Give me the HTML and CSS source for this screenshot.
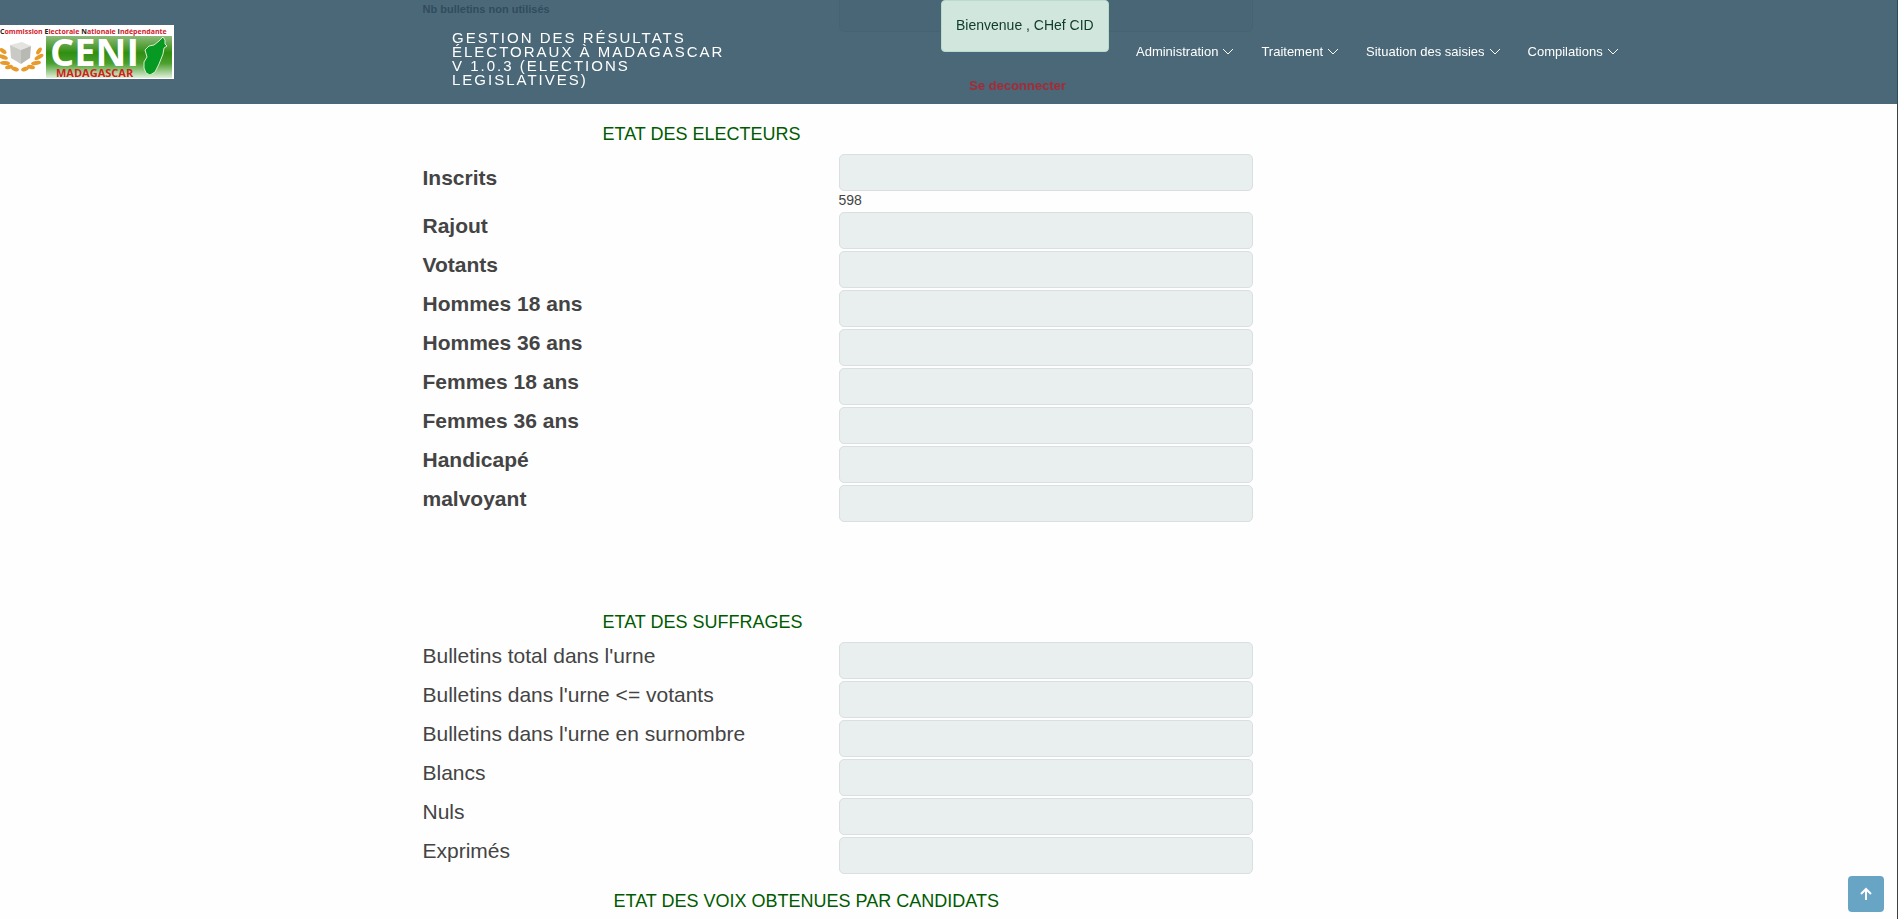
FILE: index.html
```html
<!DOCTYPE html>
<html lang="fr">
<head>
<meta charset="utf-8">
<title>Gestion des résultats électoraux</title>
<link rel="stylesheet" href="styles.css">
</head>
<body>
<header class="header">
  <a class="logo" href="#" aria-label="CENI Madagascar">
    <svg width="174" height="54" viewBox="0 0 174 54">
      <defs>
        <linearGradient id="green" x1="0" y1="0" x2="0" y2="1">
          <stop offset="0" stop-color="#8fbb7c"/><stop offset=".4" stop-color="#2f8f10"/><stop offset=".65" stop-color="#4aa02e"/><stop offset="1" stop-color="#e2efdc"/>
        </linearGradient>
      </defs>
      <rect width="174" height="54" fill="#fff"/>
      <rect x="46" y="11" width="126" height="42" fill="url(#green)"/>
      <text class="logo-top" x="0" y="9"><tspan class="dark">C</tspan>ommission <tspan class="dark">E</tspan>lectorale <tspan class="dark">N</tspan>ationale <tspan class="dark">I</tspan>ndépendante</text>
      <path d="M10 20l12-3 9 4-10 4z" fill="#e3e3df"/>
      <path d="M10 20l11 5v14l-10-6z" fill="#c9c9c5"/>
      <path d="M31 21l-10 4v14l9-6z" fill="#b9b9b4"/>
      <g fill="#e89a2b">
        <ellipse cx="3" cy="26" rx="4" ry="2" transform="rotate(35 3 26)"/><ellipse cx="3" cy="32" rx="5" ry="2" transform="rotate(20 3 32)"/><ellipse cx="5" cy="38" rx="5" ry="2" transform="rotate(5 5 38)"/><ellipse cx="9" cy="42" rx="4" ry="2" transform="rotate(-15 9 42)"/><ellipse cx="15" cy="44" rx="4" ry="2" transform="rotate(20 15 44)"/>
        <ellipse cx="39" cy="26" rx="4" ry="2" transform="rotate(-55 39 26)"/><ellipse cx="39" cy="32" rx="5" ry="2" transform="rotate(-30 39 32)"/><ellipse cx="36" cy="38" rx="5" ry="2" transform="rotate(-10 36 38)"/><ellipse cx="31" cy="42" rx="4" ry="2" transform="rotate(15 31 42)"/><ellipse cx="25" cy="44" rx="4" ry="2" transform="rotate(-20 25 44)"/>
      </g>
      <text class="logo-name" x="50" y="41">CENI</text>
      <text class="logo-country" x="56" y="52">MADAGASCAR</text>
      <path d="M163 12l2 3 0 4 2 2-3 2-1 6-4 10-4 8-5 3-4-2-2-5 0-6 3-5-2-7 4-4 5-1 5-4z" fill="#079a22" stroke="#d8edcf"/>
    </svg>
  </a>
  <h1 class="title">Gestion des résultats électoraux à Madagascar V 1.0.3 (Elections Legislatives)</h1>
  <div class="session">
    <div class="welcome">Bienvenue , CHef CID</div>
    <a class="logout" href="#">Se deconnecter</a>
  </div>
  <nav class="nav">
    <a href="#">Administration <svg class="chev" viewBox="0 0 12 12"><path d="M1 3l5 5 5-5"/></svg></a>
    <a href="#">Traitement <svg class="chev" viewBox="0 0 12 12"><path d="M1 3l5 5 5-5"/></svg></a>
    <a href="#">Situation des saisies <svg class="chev" viewBox="0 0 12 12"><path d="M1 3l5 5 5-5"/></svg></a>
    <a href="#">Compilations <svg class="chev" viewBox="0 0 12 12"><path d="M1 3l5 5 5-5"/></svg></a>
  </nav>
</header>

<main class="page">
  <form class="form">
    <div class="row unused">
      <label for="unused">Nb bulletins non utilisés</label>
      <input id="unused" type="text" disabled>
    </div>

    <h2 class="heading">ETAT DES ELECTEURS</h2>
    <div class="rows strong">
      <div class="row tall"><label for="inscrits">Inscrits</label><div class="field"><input id="inscrits" type="text" disabled><span class="hint">598</span></div></div>
      <div class="row"><label for="rajout">Rajout</label><input id="rajout" type="text" disabled></div>
      <div class="row"><label for="votants">Votants</label><input id="votants" type="text" disabled></div>
      <div class="row"><label for="h18">Hommes 18 ans</label><input id="h18" type="text" disabled></div>
      <div class="row"><label for="h36">Hommes 36 ans</label><input id="h36" type="text" disabled></div>
      <div class="row"><label for="f18">Femmes 18 ans</label><input id="f18" type="text" disabled></div>
      <div class="row"><label for="f36">Femmes 36 ans</label><input id="f36" type="text" disabled></div>
      <div class="row"><label for="handicape">Handicapé</label><input id="handicape" type="text" disabled></div>
      <div class="row"><label for="malvoyant">malvoyant</label><input id="malvoyant" type="text" disabled></div>
    </div>

    <h2 class="heading spaced">ETAT DES SUFFRAGES</h2>
    <div class="rows">
      <div class="row"><label for="total">Bulletins total dans l'urne</label><input id="total" type="text" disabled></div>
      <div class="row"><label for="valides">Bulletins dans l'urne &lt;= votants</label><input id="valides" type="text" disabled></div>
      <div class="row"><label for="surnombre">Bulletins dans l'urne en surnombre</label><input id="surnombre" type="text" disabled></div>
      <div class="row"><label for="blancs">Blancs</label><input id="blancs" type="text" disabled></div>
      <div class="row"><label for="nuls">Nuls</label><input id="nuls" type="text" disabled></div>
      <div class="row"><label for="exprimes">Exprimés</label><input id="exprimes" type="text" disabled></div>
    </div>

    <h2 class="heading wide">ETAT DES VOIX OBTENUES PAR CANDIDATS</h2>
  </form>
</main>

<a class="to-top" href="#" aria-label="Haut de page"><svg width="12" height="14" viewBox="0 0 12 14"><path d="M6 13V2M1 7l5-5 5 5"/></svg></a>
</body>
</html>
```

FILE: styles.css
```css
* { box-sizing: border-box; }

body {
  margin: 0;
  min-height: 100vh;
  overflow: hidden;
  background: #fefefe;
  border-right: 1px solid #3c4146;
  color: #444;
  font: 14px/21px "Liberation Sans", Arial, sans-serif;
}

a { color: inherit; text-decoration: none; }

.header {
  position: fixed;
  inset: 0 0 auto;
  z-index: 10;
  display: flex;
  align-items: flex-start;
  height: 104px;
  background: rgba(44, 77, 96, 0.85);
}

.logo { display: flex; width: 452px; padding-top: 25px; }
.logo-top { font: bold 7px "Open Sans", sans-serif; fill: #d3202a; }
.logo-top .dark { fill: #222; }
.logo-name { font: bold 38px "Open Sans", sans-serif; fill: #fff; }
.logo-country { font: bold 11px "Open Sans", sans-serif; fill: #d3201a; }

.title {
  width: 285px;
  margin: 31px 0 0;
  color: #fff;
  font-size: 15px;
  font-weight: 400;
  line-height: 14px;
  letter-spacing: 2px;
  text-transform: uppercase;
}

.session {
  display: flex;
  flex-direction: column;
  gap: 25px;
  width: 168px;
  margin-left: 204px;
}

.welcome {
  padding: 13px 14px 15px;
  border: 1px solid #badbcc;
  border-radius: 4px;
  background: #d1e7dd;
  color: #0f3b28;
  line-height: 22px;
  white-space: nowrap;
}

.logout { padding-left: 28px; color: #a52a35; font-size: 13px; font-weight: 700; line-height: 18px; }

.nav { display: flex; gap: 27px; margin: 43px 0 0 27px; color: #fff; font-size: 13px; line-height: 18px; }
.nav a { display: flex; align-items: center; gap: 4px; white-space: nowrap; }
.chev { width: 12px; height: 12px; fill: none; stroke: #fff; }

.page { max-width: 1320px; margin: 0 auto; padding: 0 356px 0 134px; }

.row { display: grid; grid-template-columns: 1fr 1fr; column-gap: 2px; }
.row label { padding-top: 1px; font-size: 21px; line-height: 25px; }

.row input {
  width: 100%;
  height: 37px;
  border: 1px solid #dadfe0;
  border-radius: 5px;
  background: #e9efee;
  font: inherit;
}

.rows { display: grid; gap: 2px; }
.strong label { font-weight: 700; }
.field { display: flex; flex-direction: column; }
.hint { line-height: 19px; }
.row.tall label { padding-top: 11px; }

.unused { height: 32px; }
.unused label { padding: 0; font-size: 11px; font-weight: 700; line-height: 19px; }
.unused input { height: 32px; border-top: 0; border-radius: 0 0 5px 5px; }

.heading {
  margin: 92px 0 9px 180px;
  color: #005b00;
  font-size: 18px;
  font-weight: 400;
  line-height: 21px;
}

.heading.spaced { margin-top: 90px; }
.heading.wide { margin: 17px 0 0 191px; }

.to-top {
  position: fixed;
  right: 14px;
  bottom: 7px;
  display: grid;
  place-items: center;
  width: 36px;
  height: 36px;
  border-radius: 4px;
  background: #68a4c4;
}
.to-top svg { fill: none; stroke: #fff; stroke-width: 2; }
```
